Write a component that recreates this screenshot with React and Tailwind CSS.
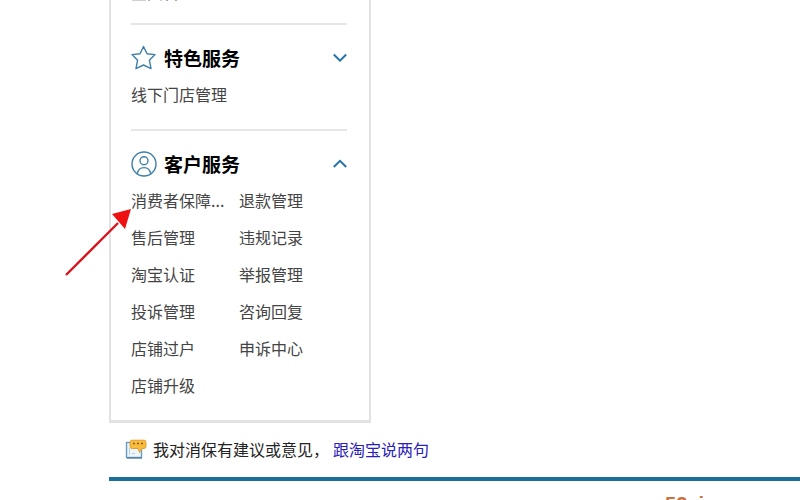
import React, { useState } from "react";

const special = ["线下门店管理"];

const customer = [
  "消费者保障...",
  "退款管理",
  "售后管理",
  "违规记录",
  "淘宝认证",
  "举报管理",
  "投诉管理",
  "咨询回复",
  "店铺过户",
  "申诉中心",
  "店铺升级",
];

function StarIcon() {
  return (
    <svg viewBox="0 0 26 26" className="size-[26px] shrink-0" fill="none" stroke="#3d7fa8" strokeWidth="1.4" strokeLinejoin="round">
      <path d="M12.5 1.5 L16 8.8 L24 9.6 L18.4 15.2 L20 23.6 L12.5 20 L5 23.6 L6.6 15.2 L1 9.6 L9 8.8 Z" />
    </svg>
  );
}

function UserIcon() {
  return (
    <svg viewBox="0 0 26 26" className="size-[26px] shrink-0" fill="none" stroke="#3f7fa8" strokeWidth="1.4">
      <circle cx="13" cy="13" r="12" />
      <circle cx="13" cy="9.8" r="4" />
      <path d="M6.5 22.5 C7 18.4 9.4 16.6 13 16.6 C16.6 16.6 19 18.4 19.5 22.5" />
    </svg>
  );
}

function Chevron({ up }) {
  return (
    <svg viewBox="0 0 14 10" className="h-[10px] w-[14px]" fill="none" stroke="#2573a7" strokeWidth="2">
      <path d={up ? "M0.8 8 L7 1.8 L13.2 8" : "M0.8 1.5 L7 7.7 L13.2 1.5"} />
    </svg>
  );
}

function FeedbackIcon() {
  return (
    <svg viewBox="0 0 22 20" className="h-5 w-[22px] shrink-0">
      <rect x="1.5" y="3.5" width="15" height="15" fill="#edf5fb" stroke="#6c9cc0" strokeWidth="1.4" />
      <path d="M2 19 H17" stroke="#47779c" strokeWidth="1.2" />
      <path d="M4.5 9 V15.5 M7 14.5 H10" stroke="#b5cee0" strokeWidth="1" fill="none" />
      <path d="M7 1.2 H19 Q21 1.2 21 3.2 V7.5 Q21 9.5 19 9.5 H17 L14.5 13.5 L13 9.5 H7 Q5 9.5 5 7.5 V3.2 Q5 1.2 7 1.2 Z" fill="#f8bd3c" stroke="#d99323" strokeWidth="0.8" />
      <path d="M8 4.5 h2 M12 4.5 h2 M16 4.5 h2" stroke="#8f5a13" strokeWidth="1.5" />
    </svg>
  );
}

function Section({ icon, title, items, up }) {
  const [open, setOpen] = useState(true);
  return (
    <section className="border-t-2 border-[#e6e6e6] pt-[19px] pb-4">
      <button
        type="button"
        aria-expanded={open}
        onClick={() => setOpen(!open)}
        className="flex h-7 w-full cursor-pointer items-center gap-[7px] text-left"
      >
        {icon}
        <span className="flex-1 text-[19px] leading-7 font-bold text-black">{title}</span>
        <Chevron up={up} />
      </button>
      {open && (
        <ul className="mt-1 grid grid-cols-2 text-base leading-[37px] text-[#444]">
          {items.map((item) => (
            <li key={item} className="whitespace-nowrap">
              <a href="#">{item}</a>
            </li>
          ))}
        </ul>
      )}
    </section>
  );
}

export default function App() {
  return (
    <div className="relative h-screen overflow-hidden bg-white font-['Noto_Sans_CJK_SC',sans-serif]">
      <main className="pl-[109px]">
        <aside className="w-[262px] border-x-2 border-b-3 border-[#e2e2e2] pr-[22px] pl-5">
          <div className="h-[23px] overflow-hidden">
            <a href="#" className="-mt-5 block text-base leading-6 text-[#444]">宝贝管理</a>
          </div>
          <Section icon={<StarIcon />} title="特色服务" items={special} />
          <Section icon={<UserIcon />} title="客户服务" items={customer} up />
        </aside>

        <p className="flex items-center pt-3.5 pb-4 pl-4 text-base leading-6 text-[#222]">
          <FeedbackIcon />
          <span className="pl-1.5">我对消保有建议或意见，</span>
          <a href="#" className="pl-1 text-[#2a20b8]">跟淘宝说两句</a>
        </p>

        <footer className="border-t-4 border-[#1b6f9d] pt-[11px] pr-24 text-right font-['Liberation_Sans',sans-serif] text-xl leading-6 font-bold text-[#c9743f]">
          52xi
        </footer>
      </main>

      {/* pointer to the first customer service entry */}
      <svg viewBox="0 0 70 70" className="absolute top-[207px] left-[64px] size-[70px]">
        <path d="M2 68 L54 16" stroke="#d8141c" strokeWidth="2.4" />
        <path d="M67 2 L48 7 L61 22 Z" fill="#ee1111" />
      </svg>
    </div>
  );
}
